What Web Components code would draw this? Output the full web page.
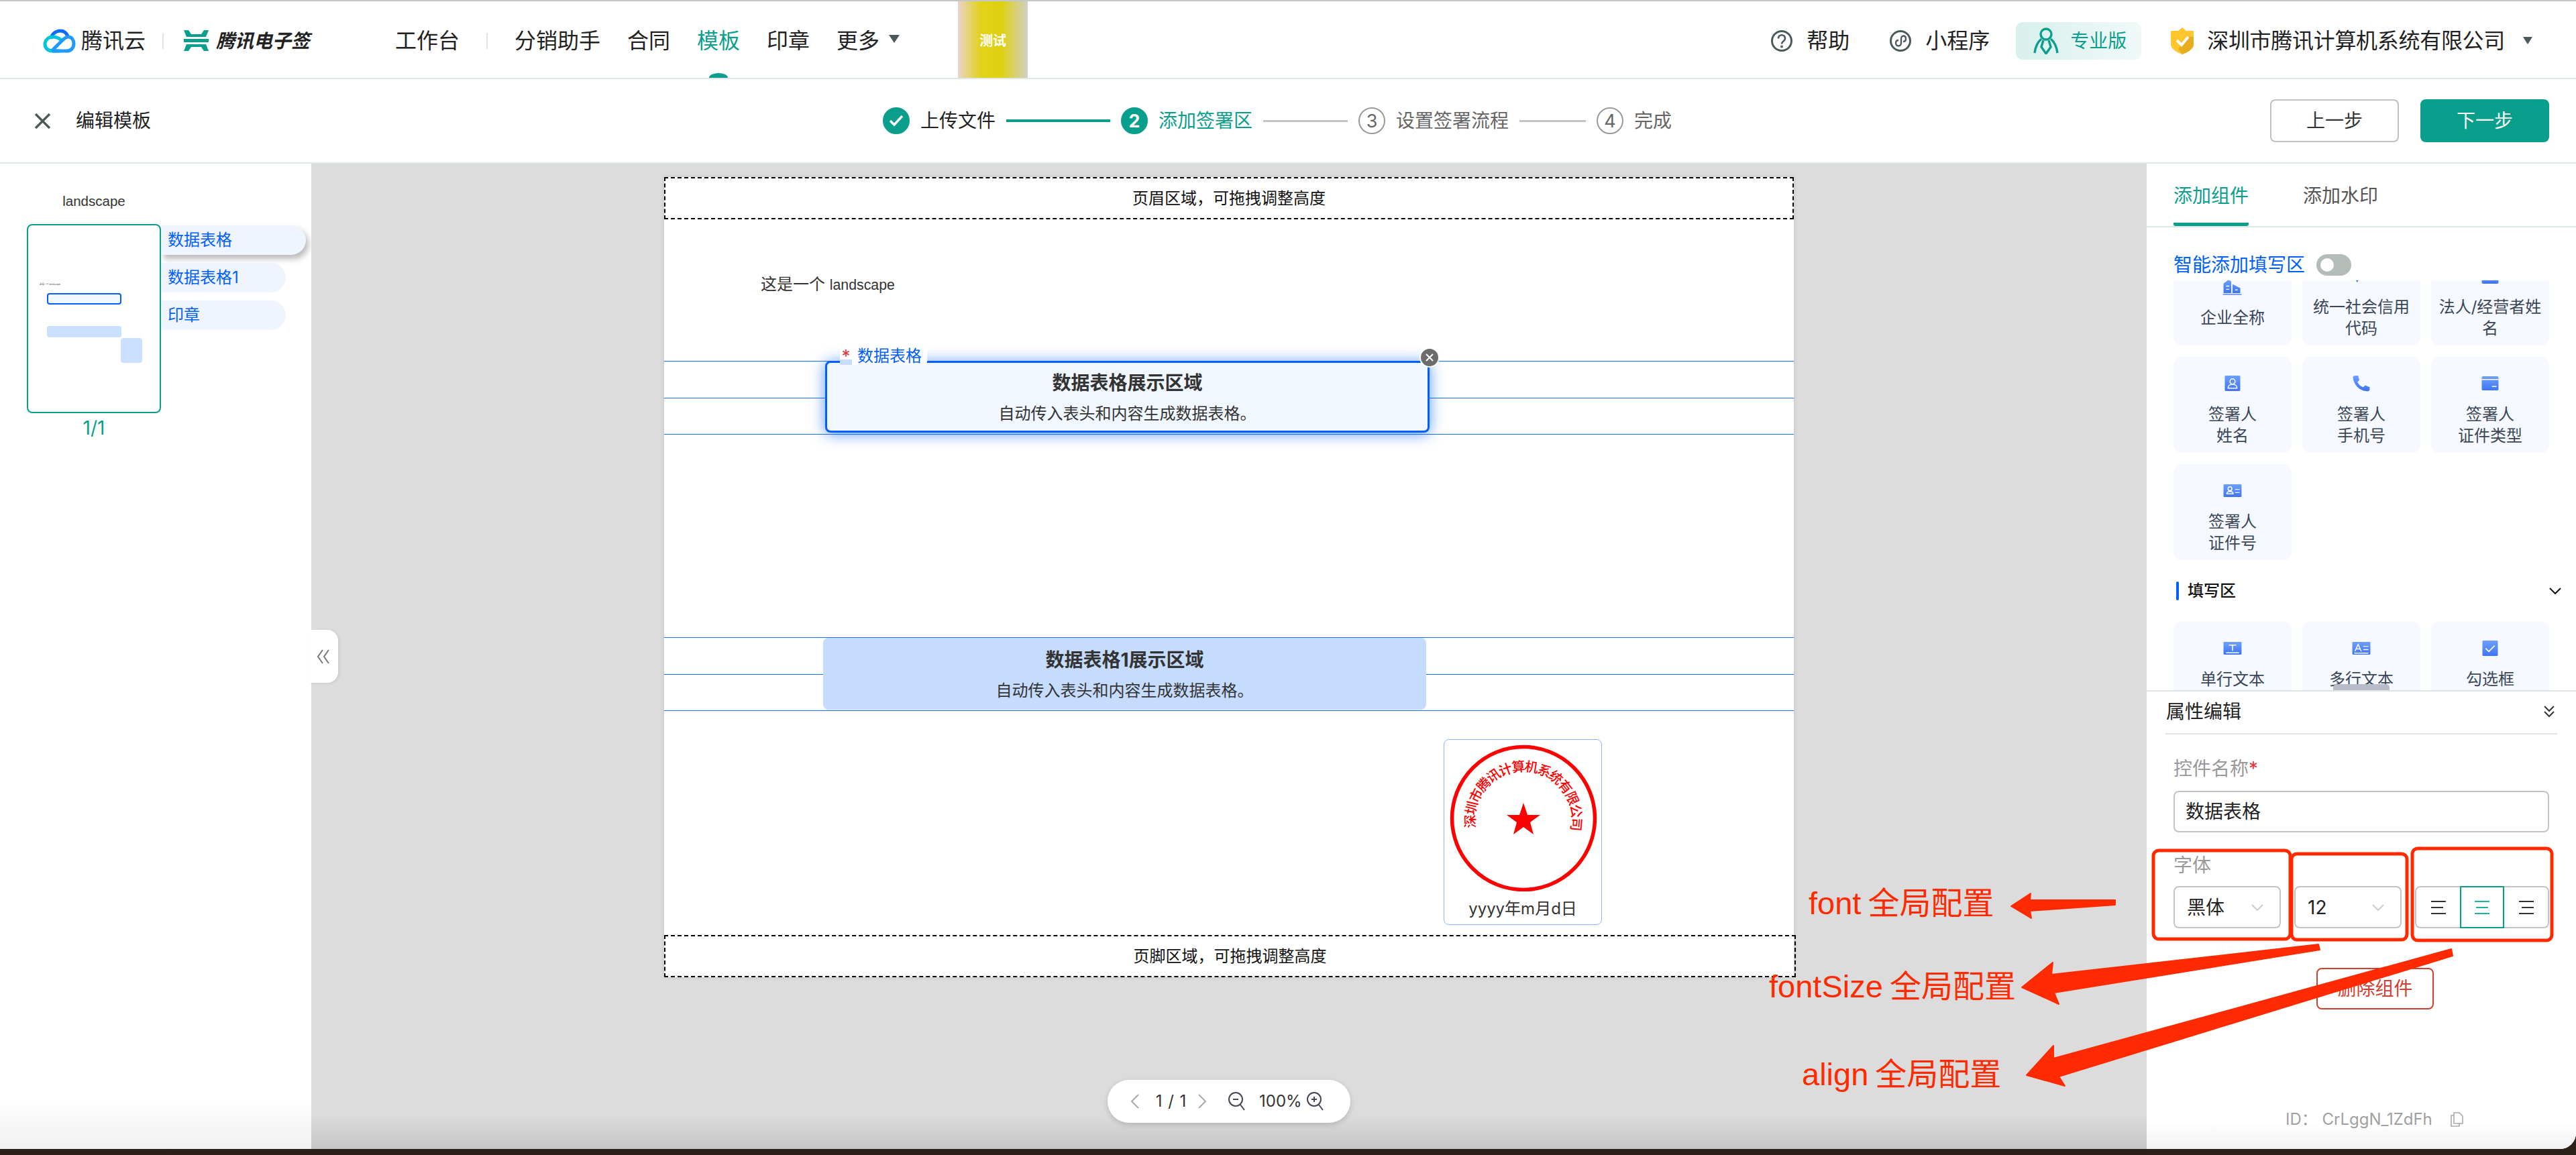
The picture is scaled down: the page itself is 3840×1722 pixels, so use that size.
<!DOCTYPE html>
<html lang="zh">
<head>
<meta charset="UTF-8">
<title>编辑模板</title>
<style>
  html, body { margin: 0; width: 3840px; height: 1722px; overflow: hidden; background: #2b211a; }
  body { position: relative; font-family: Inter, "Noto Sans CJK SC", sans-serif; color: #222; }
</style>
<script>
  const TEAL = '#0a9f8d';

  // Every element clones its static template into an open shadow root.
  class ShadowEl extends HTMLElement {
    constructor() {
      super();
      this.attachShadow({mode: 'open'});
      this.shadowRoot.appendChild(this.constructor.template.content.cloneNode(true));
    }
  }

  function tpl(html) {
    const t = document.createElement('template');
    t.innerHTML = html;
    return t;
  }

  class AppWindow extends ShadowEl {
    static template = tpl(`
      <style>
        :host { display: flex; flex-direction: column; width: 3840px; height: 1713px; background: #fff; border-bottom-right-radius: 24px; overflow: hidden; }
      </style>
      <slot></slot>`);
  }

  class TopNav extends ShadowEl {
    static template = tpl(`
      <style>
        :host { display: flex; align-items: center; height: 118px; box-sizing: border-box; flex: none; border-top: 2px solid #c6c6c6; border-bottom: 2px solid #e0e8e6; padding: 3px 65px 0 64px; font-size: 32px; background: #fff; }
        .brand { font-size: 32px; line-height: 40px; margin-left: 8px; }
        .sep { width: 2px; height: 24px; background: #e2e2e2; }
        .sign { font-size: 28px; font-weight: 700; font-style: italic; line-height: 40px; margin-left: 11px; }
        .test { align-self: stretch; width: 104px; margin: -3px 0 0 87px; display: flex; align-items: center; justify-content: center; color: #fff; font-size: 20px; font-weight: 700; background: linear-gradient(90deg, #e8d4cc 0, #e2d21c 32%, #e0d010 62%, #d0d0c6 100%); }
        .right { margin-left: auto; display: flex; align-items: center; }
        .company { margin-left: 20px; line-height: 40px; letter-spacing: -0.3px; }
        .caret { width: 0; height: 0; border-left: 7px solid transparent; border-right: 7px solid transparent; border-top: 11px solid #4a5a5a; }
      </style>
      <svg width="49" height="36" viewBox="0 0 49 36" fill="none" stroke-width="5">
        <path d="M12 15C13 7 20 3 26 3c5 0 9 3 11 8" stroke="#0a6cff"/>
        <path d="M30 19c-5-5-9-7-15-7C7 12 3 18 3 23c0 6 5 10 11 10h12" stroke="#00c6dc"/>
        <path d="M13 33l16-16c3-3 6-5 9-5 5 0 8 5 8 10 0 7-5 11-10 11H14" stroke="#1f9bff"/>
      </svg>
      <span class="brand">腾讯云</span>
      <span class="sep" style="margin:0 30px 0 25px"></span>
      <svg width="37" height="31" viewBox="0 0 37 31" fill="${TEAL}">
        <path d="M0 0h7l4 6h15l4-6h7l-4 10H4z"/><rect y="13" width="37" height="5"/><path d="M4 21h29l4 10h-7l-4-6H11l-4 6H0z"/>
      </svg>
      <span class="sign">腾讯电子签</span>
      <slot></slot>
      <span class="test">测试</span>
      <div class="right">
        <slot name="tools"></slot>
        <svg width="34" height="40" viewBox="0 0 34 40" style="margin-left:44px">
          <path d="M17 0l6 5h11v20c0 7-9 12-17 15C9 37 0 32 0 25V5h11z" fill="#ffc72c"/>
          <path d="M34 14v11c0 7-9 12-17 15l-6-8 14-18z" fill="#e8ad1e"/>
          <path d="M9 19l7 7 10-12" fill="none" stroke="#fff" stroke-width="4"/>
        </svg>
        <span class="company">深圳市腾讯计算机系统有限公司</span>
        <span class="caret" style="margin-left:27px"></span>
      </div>`);
  }

  class NavLink extends ShadowEl {
    static template = tpl(`
      <style>
        :host { display: flex; align-items: center; align-self: stretch; position: relative; margin-right: 40px; line-height: 40px; }
        :host([active]) { color: ${TEAL}; }
        :host([active])::after { content: ""; position: absolute; left: 50%; bottom: 0; margin-left: -14px; width: 28px; height: 7px; background: ${TEAL}; border-radius: 50% 50% 0 0 / 100% 100% 0 0; }
        :host([more]) { margin-right: 0; }
        .caret { display: none; width: 0; height: 0; margin-left: 14px; margin-top: -6px; border-left: 8px solid transparent; border-right: 8px solid transparent; border-top: 12px solid #4a5a5a; }
        :host([more]) .caret { display: block; }
      </style>
      <slot></slot><span class="caret"></span>`);
  }

  class NavTool extends ShadowEl {
    static template = tpl(`
      <style>
        :host { display: flex; align-items: center; gap: 21px; line-height: 40px; margin-left: 60px; }
        :host(:first-child) { margin-left: 0; }
      </style>
      <slot name="icon"></slot><slot></slot>`);
  }

  class ProBadge extends ShadowEl {
    static template = tpl(`
      <style>
        :host { display: flex; align-items: center; box-sizing: border-box; width: 187px; height: 56px; margin-left: 39px; padding-left: 26px; gap: 17px; border-radius: 10px; color: ${TEAL}; font-size: 28px; line-height: 40px; background: linear-gradient(90deg, #d8f0ec, #f0f9f8); }
      </style>
      <svg width="38" height="40" viewBox="0 0 38 40" fill="none" stroke="${TEAL}" stroke-width="3.4">
        <circle cx="19" cy="10" r="8"/>
        <path d="M12 17C6 22 3 30 2 38M26 17c6 5 9 13 10 21M15 19l-3 10 7 10 7-10-3-10"/>
      </svg>
      <slot></slot>`);
  }

  class StepBar extends ShadowEl {
    static template = tpl(`
      <style>
        :host { display: flex; align-items: center; flex: none; height: 126px; box-sizing: border-box; border-bottom: 2px solid #e0e8e6; padding: 0 40px 0 51px; font-size: 28px; background: #fff; }
        .title { margin-left: 37px; margin-right: 1091px; line-height: 40px; }
        .steps { display: flex; align-items: center; gap: 16px; }
        .btns { margin-left: auto; display: flex; gap: 32px; }
      </style>
      <svg width="25" height="25" viewBox="0 0 25 25" stroke="#4a5a5a" stroke-width="3.4" fill="none"><path d="M2 2l21 21M23 2L2 23"/></svg>
      <span class="title">编辑模板</span>
      <div class="steps"><slot></slot></div>
      <div class="btns"><slot name="btns"></slot></div>`);
  }

  class StepItem extends ShadowEl {
    static template = tpl(`
      <style>
        :host { display: flex; align-items: center; gap: 16px; line-height: 40px; color: #666; }
        :host([state=done]) { color: #222; }
        :host([state=active]) { color: ${TEAL}; }
        .dot { width: 40px; height: 40px; box-sizing: border-box; border-radius: 50%; border: 2px solid #999; display: flex; align-items: center; justify-content: center; font-size: 27px; line-height: 1; color: #666; }
        :host([state=done]) .dot, :host([state=active]) .dot { background: ${TEAL}; border-color: ${TEAL}; color: #fff; font-weight: 700; }
      </style>
      <span class="dot"></span><slot></slot>`);
    connectedCallback() {
      const dot = this.shadowRoot.querySelector('.dot');
      if (this.getAttribute('state') === 'done') {
        dot.innerHTML = '<svg width="22" height="18" viewBox="0 0 22 18" fill="none" stroke="#fff" stroke-width="3.4"><path d="M2 9l6 6L20 2"/></svg>';
      } else {
        dot.textContent = this.getAttribute('num');
      }
    }
  }

  class StepLine extends ShadowEl {
    static template = tpl(`
      <style>
        :host { display: block; height: 3px; background: #c4c4c4; }
        :host([done]) { height: 4px; background: ${TEAL}; }
      </style>`);
  }

  class FlowBtn extends ShadowEl {
    static template = tpl(`
      <style>
        :host { display: flex; align-items: center; justify-content: center; width: 192px; height: 64px; box-sizing: border-box; border: 2px solid #bcc2c0; border-radius: 8px; background: #fff; color: #333; font-size: 28px; line-height: 40px; }
        :host([primary]) { background: ${TEAL}; border-color: ${TEAL}; color: #fff; }
      </style>
      <slot></slot>`);
  }

  class WorkSpace extends ShadowEl {
    static template = tpl(`
      <style>
        :host { display: grid; grid-template-columns: 464px 2736px 640px; flex: 1; min-height: 0; }
      </style>
      <slot></slot>`);
  }

  class ThumbPanel extends ShadowEl {
    static template = tpl(`
      <style>
        :host { display: block; box-sizing: border-box; padding: 38px 0 0 40px; background: linear-gradient(180deg, #fff 95%, #f0f0f0 100%); }
        .name { width: 200px; text-align: center; font-family: "Liberation Sans", sans-serif; font-size: 20.5px; line-height: 36px; color: #333; margin-bottom: 16px; }
        .row { display: flex; align-items: flex-start; }
        .thumb { position: relative; width: 200px; height: 282px; box-sizing: border-box; border: 2px solid ${TEAL}; border-radius: 8px; background: #fff; flex: none; z-index: 1; }
        .tiny { position: absolute; left: 17px; top: 86px; font-size: 3.4px; line-height: 5px; color: #444; white-space: nowrap; }
        .box { position: absolute; box-sizing: border-box; border-radius: 4px; background: #cbe0ff; }
        .pills { display: flex; flex-direction: column; gap: 12px; padding-top: 2px; }
        .num { width: 200px; text-align: center; font-size: 28px; line-height: 40px; color: ${TEAL}; margin-top: 2px; }
      </style>
      <div class="name">landscape</div>
      <div class="row">
        <div class="thumb">
          <span class="tiny">这是一个 landscape</span>
          <span class="box" style="left:28px;top:101px;width:111px;height:17px;background:#f2f8ff;border:2px solid #0060ff"></span>
          <span class="box" style="left:28px;top:150px;width:111px;height:17px"></span>
          <span class="box" style="left:138px;top:168px;width:32px;height:37px"></span>
        </div>
        <div class="pills"><slot></slot></div>
      </div>
      <div class="num">1/1</div>`);
  }

  class FieldPill extends ShadowEl {
    static template = tpl(`
      <style>
        :host { display: flex; align-items: center; height: 44px; box-sizing: border-box; padding-left: 10px; width: 186px; border-radius: 0 22px 22px 0; background: #f0f4ff; color: #0060ff; font-size: 24px; line-height: 32px; }
        :host([current]) { width: 216px; box-shadow: 4px 6px 10px rgba(0,0,0,.28); }
      </style>
      <slot></slot>`);
  }

  class DocCanvas extends ShadowEl {
    static template = tpl(`
      <style>
        :host { display: block; position: relative; box-sizing: border-box; padding: 20px 0 0 526px; background: linear-gradient(180deg, #dcdcdc 96.5%, #c6c6c6 100%); }
        .handle { position: absolute; left: -4px; top: 695px; width: 44px; height: 79px; background: #fff; border-radius: 0 16px 16px 0; display: flex; align-items: center; justify-content: center; box-shadow: 2px 1px 4px rgba(0,0,0,.08); }
      </style>
      <slot></slot>
      <div class="handle">
        <svg width="20" height="22" viewBox="0 0 20 22" fill="none" stroke="#777" stroke-width="2"><path d="M9 1L2 11l7 10M18 1l-7 10 7 10"/></svg>
      </div>
      <page-pager></page-pager>`);
  }

  class DocPage extends ShadowEl {
    static template = tpl(`
      <style>
        :host { display: flex; flex-direction: column; justify-content: space-between; position: relative; width: 1684px; height: 1193px; background: #fff; box-shadow: 0 0 6px rgba(0,0,0,.12); }
        ::slotted(page-zone) { flex: none; }
      </style>
      <slot></slot>`);
  }

  class PageZone extends ShadowEl {
    static template = tpl(`
      <style>
        :host { display: flex; align-items: center; justify-content: center; box-sizing: border-box; height: 63px; border: 2px dashed #000; color: #111; font-size: 24px; line-height: 32px; }
        :host([foot]) { margin-right: -3px; }
      </style>
      <slot></slot>`);
  }

  // free-canvas item: a position on the document page is the content itself
  class PageText extends ShadowEl {
    static template = tpl(`
      <style>
        :host { position: absolute; font-size: 24px; line-height: 32px; color: #333; white-space: nowrap; }
        ::slotted(span) { font-family: "Liberation Sans", sans-serif; font-size: 21.3px; }
      </style>
      <slot></slot>`);
  }

  class GuideLine extends ShadowEl {
    static template = tpl(`
      <style>
        :host { position: absolute; left: 0; right: 0; height: 1px; background: #1a6ff5; }
      </style>`);
  }

  class TableWidget extends ShadowEl {
    static template = tpl(`
      <style>
        :host { position: absolute; display: flex; flex-direction: column; align-items: center; box-sizing: border-box; padding-top: 13px; background: #c5dcff; border-radius: 8px; color: #333; }
        :host([selected]) { background: #f1f7ff; border: 3px solid #0060ff; border-radius: 8px; padding-top: 10px; box-shadow: 0 2px 22px rgba(0,96,255,.65); }
        .t { font-size: 28px; font-weight: 700; line-height: 40px; }
        .s { font-size: 24px; line-height: 34px; margin-top: 9px; }
      </style>
      <div class="t"><slot></slot></div>
      <div class="s">自动传入表头和内容生成数据表格。</div>`);
  }

  class WidgetTag extends ShadowEl {
    static template = tpl(`
      <style>
        :host { position: absolute; display: flex; align-items: center; height: 26px; font-size: 24px; line-height: 26px; color: #0060ff; }
        .star { width: 18px; text-align: center; color: #e8343c; font-size: 26px; background: linear-gradient(180deg, #fff 70%, #c8dcff 70%); height: 26px; }
        .txt { background: #fff; padding: 0 8px; }
      </style>
      <span class="star">*</span><span class="txt"><slot></slot></span>`);
  }

  class CloseDot extends ShadowEl {
    static template = tpl(`
      <style>
        :host { position: absolute; width: 30px; height: 30px; box-sizing: border-box; border-radius: 50%; background: #6c6c6c; border: 2px solid #fff; display: flex; align-items: center; justify-content: center; }
      </style>
      <svg width="14" height="14" viewBox="0 0 14 14" stroke="#fff" stroke-width="2"><path d="M2 2l10 10M12 2L2 12"/></svg>`);
  }

  class StampWidget extends ShadowEl {
    static template = tpl(`
      <style>
        :host { position: absolute; display: block; box-sizing: border-box; width: 236px; height: 277px; border: 1.5px solid #8ab6ff; border-radius: 8px; background: #fff; }
        svg { display: block; }
        .date { text-align: center; font-size: 24px; line-height: 32px; color: #333; margin-top: 10px; }
      </style>
      <svg width="233" height="226" viewBox="0 0 233 226">
        <defs><path id="ring" d="M47 131A72 72 0 1 1 189 131"/></defs>
        <circle cx="118" cy="117" r="106.5" fill="none" stroke="#f00" stroke-width="5.5"/>
        <polygon fill="#f00" points="118,94 124,112 143,112 128,123 133,141 118,130 103,141 108,123 93,112 112,112"/>
        <text font-size="20" font-weight="500" fill="#f00" font-family="'Liberation Serif','Noto Sans CJK SC',serif"><textPath href="#ring" textLength="254" lengthAdjust="spacing">深圳市腾讯计算机系统有限公司</textPath></text>
      </svg>
      <div class="date">yyyy年m月d日</div>`);
  }

  class PagePager extends ShadowEl {
    static template = tpl(`
      <style>
        :host { position: absolute; left: 50%; bottom: 39px; margin-left: -181px; width: 362px; height: 64px; box-sizing: border-box; padding-left: 33px; display: flex; align-items: center; background: #fff; border-radius: 32px; box-shadow: 0 3px 8px rgba(0,0,0,.16); font-size: 24px; line-height: 32px; color: #333; }
        .n { text-align: center; white-space: nowrap; }
      </style>
      <svg width="16" height="24" viewBox="0 0 16 24" fill="none" stroke="#aaa" stroke-width="2"><path d="M13 2L3 12l10 10"/></svg>
      <span class="n" style="margin-left:19px;width:53px;word-spacing:2px">1 / 1</span>
      <svg width="16" height="24" viewBox="0 0 16 24" fill="none" stroke="#aaa" stroke-width="2" style="margin-left:12px"><path d="M3 2l10 10L3 22"/></svg>
      <svg width="28" height="30" viewBox="0 0 28 30" fill="none" stroke="#445" stroke-width="2" style="margin-left:30px"><circle cx="12" cy="12" r="10"/><path d="M8 12h8M19 20l6 8"/></svg>
      <span class="n" style="margin-left:19px;width:61px">100%</span>
      <svg width="28" height="30" viewBox="0 0 28 30" fill="none" stroke="#445" stroke-width="2" style="margin-left:9px"><circle cx="12" cy="12" r="10"/><path d="M8 12h8M12 8v8M19 20l6 8"/></svg>`);
  }

  class SidePanel extends ShadowEl {
    static template = tpl(`
      <style>
        :host { display: flex; flex-direction: column; min-height: 0; background: #fff; }
        .tabs { display: flex; gap: 81px; flex: none; box-sizing: border-box; height: 95px; padding: 26px 0 0 40px; border-bottom: 2px solid #e0e8e6; font-size: 28px; line-height: 44px; color: #555; }
        .tab { height: 67px; box-sizing: border-box; }
        .on { color: ${TEAL}; border-bottom: 5px solid ${TEAL}; border-radius: 0 0 3px 3px; }
        .smart { display: flex; align-items: center; flex: none; gap: 17px; box-sizing: border-box; height: 79px; padding: 33px 0 0 40px; font-size: 28px; color: #0060ff; line-height: 48px; }
        .toggle { width: 52px; height: 32px; border-radius: 16px; background: #b4bcb8; position: relative; }
        .toggle::after { content: ""; position: absolute; left: 6px; top: 6px; width: 20px; height: 20px; border-radius: 50%; background: #fff; }
      </style>
      <div class="tabs"><span class="tab on">添加组件</span><span class="tab">添加水印</span></div>
      <div class="smart">智能添加填写区<span class="toggle"></span></div>
      <slot></slot>`);
  }

  class CompLibrary extends ShadowEl {
    static template = tpl(`
      <style>
        :host { display: block; position: relative; flex: none; height: 611px; overflow: hidden; padding-left: 40px; }
        .scroll { margin-top: -46px; }
        .grip { position: absolute; left: 278px; bottom: 0; width: 84px; height: 9px; border-radius: 5px 5px 0 0; background: #b8bcc8; }
      </style>
      <div class="scroll"><slot></slot></div>
      <span class="grip"></span>`);
  }

  class CompGrid extends ShadowEl {
    static template = tpl(`
      <style>
        :host { display: grid; grid-template-columns: repeat(3, 176px); column-gap: 16px; row-gap: 17px; }
      </style>
      <slot></slot>`);
  }

  class CompHead extends ShadowEl {
    static template = tpl(`
      <style>
        :host { display: flex; align-items: center; height: 92px; width: 578px; padding-left: 4px; box-sizing: border-box; font-size: 24px; font-weight: 500; line-height: 32px; color: #111; }
        .bar { width: 4px; height: 28px; border-radius: 2px; background: #0060ff; margin-right: 13px; }
        svg { margin-left: auto; }
      </style>
      <span class="bar"></span><slot></slot>
      <svg width="18" height="10" viewBox="0 0 18 10" fill="none" stroke="#111" stroke-width="2"><path d="M1 1l8 8 8-8"/></svg>`);
  }

  const SHAPES = {
    building: '<path d="M1 22V7l8-6 4 3v18zM15 22V8l12 6v8z"/><rect y="23" width="29" height="1.6"/><path d="M5 11h5M5 16h5M19 17h4" stroke="#fff" stroke-width="1.5"/>',
    usci: '<path d="M2 2h26v12H12l-3 8-7-8z"/>',
    legal: '<rect x="2" y="8" width="26" height="16" rx="3"/><circle cx="15" cy="15" r="2.4" fill="#fff"/>',
    person: '<rect x="3" width="24" height="24" rx="1.5"/><circle cx="15" cy="9" r="4" fill="none" stroke="#fff" stroke-width="1.6"/><path d="M8 19.5c0-8 14-8 14 0z" fill="none" stroke="#fff" stroke-width="1.6"/>',
    phone: '<path d="M2 3C2 1 4 0 6 0h4l2 7-3 3c2 4 5 7 9 8l3-3 7 3v3c0 3-3 4-6 3C12 23 3 14 2 3z"/>',
    card: '<rect x="2" y="1" width="26" height="22" rx="2"/><path d="M2 6h26M18 17h7" stroke="#fff" stroke-width="1.6"/>',
    idcard: '<rect x="1" y="2" width="28" height="20" rx="1.5"/><circle cx="11" cy="9" r="3" fill="none" stroke="#fff" stroke-width="1.5"/><path d="M6 17c0-5 10-5 10 0z M19 10h7M19 15h7" fill="none" stroke="#fff" stroke-width="1.5"/>',
    text: '<rect x="1" y="2" width="28" height="20" rx="1.5"/><path d="M9 7h12M15 7v9M5 19h20" stroke="#fff" stroke-width="1.6"/>',
    multi: '<rect x="1" y="2" width="28" height="20" rx="1.5"/><path d="M5 17l5-11 5 11M7 13h6M18 9h8M18 14h8M4 19.5h22" fill="none" stroke="#fff" stroke-width="1.5"/>',
    check: '<rect x="3" width="24" height="24" rx="1.5"/><path d="M8 12l5 5 9-9" fill="none" stroke="#fff" stroke-width="1.8"/>'
  };

  class CompCard extends ShadowEl {
    static template = tpl(`
      <style>
        :host { display: flex; flex-direction: column; align-items: center; justify-content: center; box-sizing: border-box; padding: 28px 0 9px; border-radius: 12px; background: #f6f9ff; color: #3a4656; font-size: 24px; line-height: 32px; text-align: center; min-height: 111px; }
        svg { flex: none; display: block; margin-bottom: 18px; }
      </style>
      <svg width="30" height="24" viewBox="0 0 30 25"></svg>
      <div><slot></slot></div>`);
    connectedCallback() {
      const svg = this.shadowRoot.querySelector('svg');
      svg.innerHTML = '<defs><linearGradient id="g" x1="0" y1="0" x2="0" y2="1"><stop offset="0" stop-color="#6ea0ff"/><stop offset="1" stop-color="#3f74f2"/></linearGradient></defs><g fill="url(#g)">' + SHAPES[this.getAttribute('icon')] + '</g>';
    }
  }

  class PropPanel extends ShadowEl {
    static template = tpl(`
      <style>
        :host { display: block; flex: 1; min-height: 0; box-sizing: border-box; border-top: 2px solid #dfe3e6; background: linear-gradient(180deg, #fff 94%, #f2f2f2 100%); }
        .head { display: flex; align-items: center; justify-content: space-between; box-sizing: border-box; height: 64px; margin: 0 28px; padding: 0 3px 2px 1px; border-bottom: 2px solid #dfe3e6; font-size: 28px; line-height: 40px; color: #222; }
        form { display: block; margin: 0; padding: 31px 40px 0; }
        .lab { font-size: 28px; line-height: 40px; color: #999; margin-bottom: 13px; }
        .lab i { color: #e8343c; font-style: normal; }
        .inp { box-sizing: border-box; height: 62px; border: 2px solid #c0c4c4; border-radius: 8px; padding-left: 16px; display: flex; align-items: center; font-size: 28px; line-height: 40px; color: #222; margin-bottom: 29px; }
        .cols { display: grid; grid-template-columns: 160px 160px 200px; column-gap: 20px; margin-top: -2px; }
        .del { box-sizing: border-box; width: 175px; height: 62px; margin: 59px 0 0 213px; border: 2px solid #d24030; border-radius: 8px; color: #d24030; font-size: 28px; line-height: 40px; display: flex; align-items: center; justify-content: center; }
        .id { display: flex; align-items: center; margin: 144px 0 0 167px; font-size: 24px; line-height: 40px; color: #a0a0a0; }
      </style>
      <div class="head">属性编辑
        <svg width="18" height="20" viewBox="0 0 18 20" fill="none" stroke="#333" stroke-width="2"><path d="M2 2l7 7 7-7M2 10l7 7 7-7"/></svg>
      </div>
      <form>
        <div class="lab">控件名称<i>*</i></div>
        <div class="inp">数据表格</div>
        <div class="lab">字体</div>
        <div class="cols">
          <prop-select>黑体</prop-select>
          <prop-select>12</prop-select>
          <align-group></align-group>
        </div>
        <div class="del">删除组件</div>
        <div class="id">ID：&nbsp;CrLggN_1ZdFh
          <svg width="20" height="22" viewBox="0 0 20 22" fill="none" stroke="#aaa" stroke-width="1.6" style="margin-left:26px"><path d="M6 1h8l5 5v11H6zM6 5H2v16h12v-4"/></svg>
        </div>
      </form>`);
  }

  class PropSelect extends ShadowEl {
    static template = tpl(`
      <style>
        :host { display: flex; align-items: center; justify-content: space-between; box-sizing: border-box; height: 63px; border: 2px solid #c0c4c4; border-radius: 8px; padding: 0 24px 0 18px; font-size: 28px; line-height: 40px; color: #222; }
      </style>
      <slot></slot>
      <svg width="18" height="10" viewBox="0 0 18 10" fill="none" stroke="#ccc" stroke-width="2"><path d="M1 1l8 8 8-8"/></svg>`);
  }

  class AlignGroup extends ShadowEl {
    static template = tpl(`
      <style>
        :host { display: flex; box-sizing: border-box; height: 63px; border: 2px solid #c0c4c4; border-radius: 8px; }
        div { flex: 1; display: flex; align-items: center; justify-content: center; margin: -2px 0; }
        .on { flex: none; width: 66px; border: 2px solid ${TEAL}; box-sizing: border-box; }
      </style>
      <div><svg width="22" height="20" viewBox="0 0 22 20" stroke="#333" stroke-width="2"><path d="M0 1h22M0 10h18M0 19h22"/></svg></div>
      <div class="on"><svg width="22" height="20" viewBox="0 0 22 20" stroke="#1ab5a0" stroke-width="2"><path d="M0 1h22M2 10h18M0 19h22"/></svg></div>
      <div><svg width="22" height="20" viewBox="0 0 22 20" stroke="#333" stroke-width="2"><path d="M0 1h22M4 10h18M0 19h22"/></svg></div>`);
  }

  // red hand-drawn markup lying over the whole screenshot
  class NoteLayer extends ShadowEl {
    static template = tpl(`
      <style>
        :host { position: absolute; left: 0; top: 0; width: 3840px; height: 1722px; pointer-events: none; }
        text { font-family: "Liberation Sans", "Noto Sans CJK SC", sans-serif; font-size: 47px; fill: #ff2a00; word-spacing: -3px; }
        rect { fill: none; stroke: #ff2a00; stroke-width: 5; }
        polygon { fill: #ff2a00; stroke: #ff2a00; stroke-width: 2; stroke-linejoin: round; }
      </style>
      <svg width="3840" height="1722" viewBox="0 0 3840 1722">
        <rect x="3210" y="1268" width="204" height="132" rx="8"/>
        <rect x="3416" y="1273" width="172" height="128" rx="8"/>
        <rect x="3596" y="1265" width="208" height="137" rx="8"/>
        <polygon points="2998,1351 3027,1332 3026,1342 3153,1342 3153,1349 3026,1358 3028,1369"/>
        <polygon points="3014,1472 3060,1435 3058,1453 3456,1408 3458,1416 3062,1480 3069,1497"/>
        <polygon points="3021,1603 3061,1559 3061,1578 3654,1415 3656,1425 3069,1605 3078,1619"/>
        <text x="2696" y="1363">font 全局配置</text>
        <text x="2637" y="1487">fontSize 全局配置</text>
        <text x="2686" y="1618">align 全局配置</text>
      </svg>`);
  }

  customElements.define('app-window', AppWindow);
  customElements.define('top-nav', TopNav);
  customElements.define('nav-link', NavLink);
  customElements.define('nav-tool', NavTool);
  customElements.define('pro-badge', ProBadge);
  customElements.define('step-bar', StepBar);
  customElements.define('step-item', StepItem);
  customElements.define('step-line', StepLine);
  customElements.define('flow-btn', FlowBtn);
  customElements.define('work-space', WorkSpace);
  customElements.define('thumb-panel', ThumbPanel);
  customElements.define('field-pill', FieldPill);
  customElements.define('doc-canvas', DocCanvas);
  customElements.define('doc-page', DocPage);
  customElements.define('page-zone', PageZone);
  customElements.define('page-text', PageText);
  customElements.define('guide-line', GuideLine);
  customElements.define('table-widget', TableWidget);
  customElements.define('widget-tag', WidgetTag);
  customElements.define('close-dot', CloseDot);
  customElements.define('stamp-widget', StampWidget);
  customElements.define('page-pager', PagePager);
  customElements.define('side-panel', SidePanel);
  customElements.define('comp-library', CompLibrary);
  customElements.define('comp-grid', CompGrid);
  customElements.define('comp-head', CompHead);
  customElements.define('comp-card', CompCard);
  customElements.define('prop-panel', PropPanel);
  customElements.define('prop-select', PropSelect);
  customElements.define('align-group', AlignGroup);
  customElements.define('note-layer', NoteLayer);
</script>
</head>
<body>
  <app-window>
    <top-nav>
      <nav-link style="margin-left:127px;margin-right:40px">工作台</nav-link>
      <span style="width:2px;height:24px;background:#e2e2e2;margin-right:40px"></span>
      <nav-link>分销助手</nav-link>
      <nav-link>合同</nav-link>
      <nav-link active>模板</nav-link>
      <nav-link>印章</nav-link>
      <nav-link more>更多</nav-link>
      <nav-tool slot="tools">
        <svg slot="icon" width="32" height="32" viewBox="0 0 32 32" fill="none" stroke="#4a5a5a" stroke-width="3"><circle cx="16" cy="16" r="14.5"/><path d="M11 12.5c0-7 10-7 10 0 0 4-5 4-5 8" stroke-width="2.6"/><circle cx="16" cy="24.5" r="1.2" stroke-width="1.6"/></svg>
        帮助
      </nav-tool>
      <nav-tool slot="tools">
        <svg slot="icon" width="32" height="32" viewBox="0 0 32 32" fill="none" stroke="#4a5a5a" stroke-width="3"><circle cx="16" cy="16" r="14.5"/><path d="M9 19c0 6 8 6 8 0v-6c0-6 7-6 7 0 0 3-2 4-4 4M13 15c-2 0-4 1-4 4" stroke-width="2.4"/></svg>
        小程序
      </nav-tool>
      <pro-badge slot="tools">专业版</pro-badge>
    </top-nav>
    <step-bar>
      <step-item state="done">上传文件</step-item>
      <step-line done style="width:155px"></step-line>
      <step-item state="active" num="2">添加签署区</step-item>
      <step-line style="width:126px"></step-line>
      <step-item num="3">设置签署流程</step-item>
      <step-line style="width:99px"></step-line>
      <step-item num="4">完成</step-item>
      <flow-btn slot="btns">上一步</flow-btn>
      <flow-btn slot="btns" primary>下一步</flow-btn>
    </step-bar>
    <work-space>
      <thumb-panel>
        <field-pill current>数据表格</field-pill>
        <field-pill>数据表格1</field-pill>
        <field-pill>印章</field-pill>
      </thumb-panel>
      <doc-canvas>
        <doc-page>
          <page-zone>页眉区域，可拖拽调整高度</page-zone>
          <page-text style="left:144px;top:144px">这是一个 <span>landscape</span></page-text>
          <guide-line style="top:274px"></guide-line>
          <guide-line style="top:329px"></guide-line>
          <guide-line style="top:383px"></guide-line>
          <table-widget selected style="left:240px;top:274px;width:901px;height:107px">数据表格展示区域</table-widget>
          <widget-tag style="left:262px;top:254px">数据表格</widget-tag>
          <close-dot style="left:1126px;top:254px"></close-dot>
          <guide-line style="top:686px"></guide-line>
          <guide-line style="top:741px"></guide-line>
          <guide-line style="top:795px"></guide-line>
          <table-widget style="left:237px;top:687px;width:899px;height:107px">数据表格1展示区域</table-widget>
          <stamp-widget style="left:1162px;top:838px"></stamp-widget>
          <page-zone foot>页脚区域，可拖拽调整高度</page-zone>
        </doc-page>
      </doc-canvas>
      <side-panel>
        <comp-library>
          <comp-grid>
            <comp-card icon="building">企业全称</comp-card>
            <comp-card icon="usci">统一社会信用<br>代码</comp-card>
            <comp-card icon="legal">法人/经营者姓<br>名</comp-card>
            <comp-card icon="person">签署人<br>姓名</comp-card>
            <comp-card icon="phone">签署人<br>手机号</comp-card>
            <comp-card icon="card">签署人<br>证件类型</comp-card>
            <comp-card icon="idcard">签署人<br>证件号</comp-card>
          </comp-grid>
          <comp-head>填写区</comp-head>
          <comp-grid>
            <comp-card icon="text">单行文本</comp-card>
            <comp-card icon="multi">多行文本</comp-card>
            <comp-card icon="check">勾选框</comp-card>
          </comp-grid>
        </comp-library>
        <prop-panel></prop-panel>
      </side-panel>
    </work-space>
  </app-window>
  <note-layer></note-layer>
</body>
</html>
